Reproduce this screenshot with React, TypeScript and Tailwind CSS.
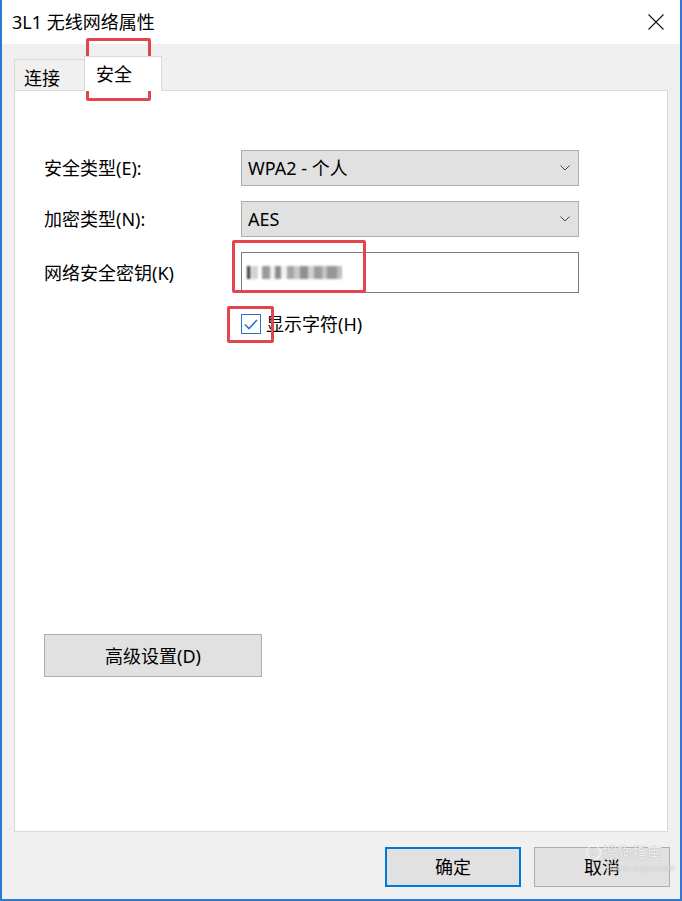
import React from "react";

const font = "font-['Noto_Sans','Noto_Sans_CJK_SC',sans-serif]";

function Chevron() {
  return (
    <svg width="10" height="6" viewBox="0 0 10 6" fill="none">
      <path d="M0.5 0.5L5 5L9.5 0.5" stroke="#444" strokeWidth="1" />
    </svg>
  );
}

function Combo({ value }: { value: string }) {
  return (
    <div className="flex h-[36px] w-[338px] items-center justify-between border border-[#adadad] bg-[#e1e1e1] pl-[6px] pr-[8px]">
      <span className="text-[18px] leading-none text-black">{value}</span>
      <Chevron />
    </div>
  );
}

// blurred password characters
const mosaic = [
  { w: 3, c: "#3a3a3a" },
  { w: 8, c: "#d4d4d4" },
  { w: 4, c: "#ffffff" },
  { w: 8, c: "#9a9a9a" },
  { w: 5, c: "#eeeeee" },
  { w: 6, c: "#8c8c8c" },
  { w: 6, c: "#f4f4f4" },
  { w: 7, c: "#a4a4a4" },
  { w: 6, c: "#c8c8c8" },
  { w: 8, c: "#8f8f8f" },
  { w: 6, c: "#d0d0d0" },
  { w: 8, c: "#9c9c9c" },
  { w: 5, c: "#c4c4c4" },
  { w: 10, c: "#959595" },
  { w: 5, c: "#bdbdbd" },
];

export default function App() {
  return (
    <div
      className={`relative flex h-[901px] w-[682px] flex-col border-x-2 border-b-2 border-[#2b79d0] bg-[#f0f0f0] text-black ${font}`}
    >
      {/* title bar */}
      <div className="flex h-[44px] items-center justify-between bg-white pl-[10px] pr-[16px]">
        <span className="text-[18px] leading-none">3L1 无线网络属性</span>
        <svg width="16" height="16" viewBox="0 0 16 16" fill="none">
          <path d="M0.5 0.5L15.5 15.5M15.5 0.5L0.5 15.5" stroke="#111" strokeWidth="1.1" />
        </svg>
      </div>

      <div className="px-[12px] pt-[12px]">
        {/* tabs */}
        <div className="flex h-[34px] items-end">
          <div className="flex h-[31px] w-[70px] items-center border-l border-t border-[#d9d9d9] bg-[#f0f0f0] pl-[9px] pt-[6px] text-[18px] leading-none">
            连接
          </div>
          <div className="relative z-10 -mb-px flex h-[35px] w-[78px] items-center border-x border-t border-[#d9d9d9] bg-white pl-[11px] text-[18px] leading-none">
            安全
          </div>
        </div>

        {/* panel */}
        <div className="flex h-[742px] flex-col border border-[#d9d9d9] bg-white pl-[29px]">
          <div className="mt-[59px] flex items-center">
            <span className="w-[197px] text-[18px] leading-none">安全类型(E):</span>
            <Combo value="WPA2 - 个人" />
          </div>
          <div className="mt-[15px] flex items-center">
            <span className="w-[197px] text-[18px] leading-none">加密类型(N):</span>
            <Combo value="AES" />
          </div>
          <div className="mt-[15px] flex items-center">
            <span className="w-[197px] text-[18px] leading-none">网络安全密钥(K)</span>
            <div className="flex h-[41px] w-[338px] items-center border border-[#7a7a7a] bg-white pl-[5px]">
              <div className="flex h-[13px] items-stretch blur-[0.8px]">
                {mosaic.map((m, i) => (
                  <div key={i} style={{ width: m.w, background: m.c }} />
                ))}
              </div>
            </div>
          </div>
          <div className="mt-[21px] flex items-center pl-[197px]">
            <div className="flex h-[20px] w-[20px] items-center justify-center border border-[#2a73c8] bg-white">
              <svg width="14" height="11" viewBox="0 0 14 11" fill="none">
                <path d="M1 5.5L5 9.5L13 1" stroke="#2a73c8" strokeWidth="1.6" />
              </svg>
            </div>
            <span className="ml-[5px] text-[18px] leading-none">显示字符(H)</span>
          </div>

          <button className="mt-[300px] flex h-[43px] w-[218px] items-center justify-center border border-[#adadad] bg-[#e1e1e1] text-[18px] leading-none">
            高级设置(D)
          </button>
        </div>
      </div>

      {/* footer buttons */}
      <div className="flex justify-end gap-[13px] pr-[10px] pt-[15px]">
        <button className="flex h-[40px] w-[136px] items-center justify-center border-2 border-[#0078d7] bg-[#e1e1e1] text-[18px] leading-none">
          确定
        </button>
        <button className="flex h-[40px] w-[136px] items-center justify-center border border-[#adadad] bg-[#e1e1e1] text-[18px] leading-none">
          取消
        </button>
      </div>

      {/* annotation boxes */}
      <div className="absolute left-[84px] top-[38px] h-[63px] w-[65px] rounded-[2px] border-[3px] border-[#e2454b]" />
      <div className="absolute left-[230px] top-[240px] h-[53px] w-[134px] rounded-[2px] border-[3px] border-[#e2454b]" />
      <div className="absolute left-[225px] top-[306px] h-[37px] w-[47px] rounded-[2px] border-[3px] border-[#e2454b]" />

      {/* watermark */}
      <div className="pointer-events-none absolute left-[584px] top-[845px] flex flex-col items-start">
        <div className="flex items-center gap-[1px] text-[15px] leading-none text-white/80 [text-shadow:0_0_1px_#999]">
          <span className="flex h-[15px] w-[15px] items-center justify-center rounded-full border border-white/80 text-[11px] [text-shadow:0_0_1px_#999]">
            S
          </span>
          <span>搜狗指南</span>
        </div>
        <span className="ml-[20px] mt-[4px] text-[8px] leading-none text-white/60 [text-shadow:0_0_1px_#aaa]">
          zhinan.sogou.com
        </span>
      </div>
    </div>
  );
}
